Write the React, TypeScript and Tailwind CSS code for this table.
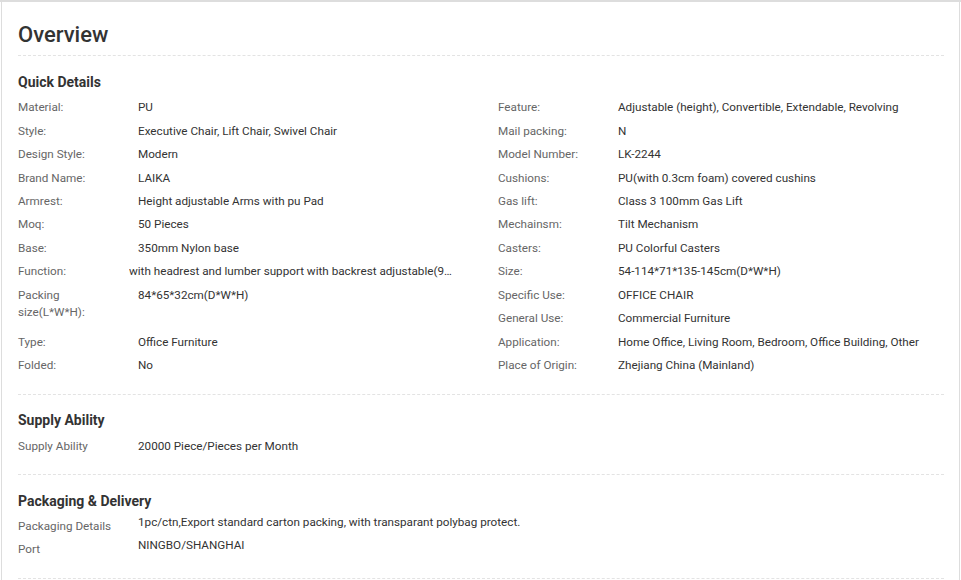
import React from "react";

type Item = { label: string; value: string; tall?: boolean; shift?: boolean };

const left: Item[] = [
  { label: "Material:", value: "PU" },
  { label: "Style:", value: "Executive Chair, Lift Chair, Swivel Chair" },
  { label: "Design Style:", value: "Modern" },
  { label: "Brand Name:", value: "LAIKA" },
  { label: "Armrest:", value: "Height adjustable Arms with pu Pad" },
  { label: "Moq:", value: "50 Pieces" },
  { label: "Base:", value: "350mm Nylon base" },
  {
    label: "Function:",
    value: "with headrest and lumber support with backrest adjustable(90-135 degree)",
    shift: true,
  },
  { label: "Packing size(L*W*H):", value: "84*65*32cm(D*W*H)", tall: true },
  { label: "Type:", value: "Office Furniture" },
  { label: "Folded:", value: "No" },
];

const right: Item[] = [
  { label: "Feature:", value: "Adjustable (height), Convertible, Extendable, Revolving" },
  { label: "Mail packing:", value: "N" },
  { label: "Model Number:", value: "LK-2244" },
  { label: "Cushions:", value: "PU(with 0.3cm foam) covered cushins" },
  { label: "Gas lift:", value: "Class 3 100mm Gas Lift" },
  { label: "Mechainsm:", value: "Tilt Mechanism" },
  { label: "Casters:", value: "PU Colorful Casters" },
  { label: "Size:", value: "54-114*71*135-145cm(D*W*H)" },
  { label: "Specific Use:", value: "OFFICE CHAIR" },
  { label: "General Use:", value: "Commercial Furniture" },
  { label: "Application:", value: "Home Office, Living Room, Bedroom, Office Building, Other" },
  { label: "Place of Origin:", value: "Zhejiang China (Mainland)" },
];

function Row({ item }: { item: Item }) {
  return (
    <div
      className={
        "flex py-[3px] leading-[17.45px] " + (item.tall ? "h-[46.9px]" : "h-[23.45px]")
      }
    >
      <div className={"w-[120px] shrink-0 text-[#666] " + (item.tall ? "pr-[40px]" : "")}>
        {item.label}
      </div>
      {item.shift ? (
        <div className="-ml-[9px] w-[328px] truncate text-[#333]">{item.value}</div>
      ) : (
        <div className="text-[#333] whitespace-nowrap">{item.value}</div>
      )}
    </div>
  );
}

function Dashed() {
  return <div className="border-t border-dashed border-[#e3e3e3]" />;
}

export default function App() {
  return (
    <div
      className="w-[961px] h-[580px] bg-white border-t-2 border-[#dddddd] overflow-hidden text-[11.7px]"
      style={{ fontFamily: "Roboto, 'Liberation Sans', sans-serif" }}
    >
      <div className="ml-[1px] w-[959px] h-full border-x border-[#dddddd] pl-[16px] pr-[15px]">
        <h1 className="pt-[18px] text-[22px] leading-[30px] font-medium text-[#333]">Overview</h1>
        <div className="mt-[5px]">
          <Dashed />
        </div>

        <h2 className="mt-[15.5px] text-[14px] leading-[20px] font-bold text-[#333]">Quick Details</h2>
        <div className="mt-[4.8px] grid grid-cols-2 w-[960px]">
          <div className="flex flex-col">
            {left.map((it) => (
              <Row key={it.label} item={it} />
            ))}
          </div>
          <div className="flex flex-col">
            {right.map((it) => (
              <Row key={it.label} item={it} />
            ))}
          </div>
        </div>
        <div className="mt-[16.3px]">
          <Dashed />
        </div>

        <h2 className="mt-[15px] text-[14px] leading-[20px] font-bold text-[#333]">Supply Ability</h2>
        <div className="mt-[5.3px] flex py-[3px] leading-[17.45px]">
          <div className="w-[120px] shrink-0 text-[#666]">Supply Ability</div>
          <div className="text-[#333]">20000 Piece/Pieces per Month</div>
        </div>
        <div className="mt-[15.3px]">
          <Dashed />
        </div>

        <h2 className="mt-[16px] text-[14px] leading-[20px] font-bold text-[#333]">
          Packaging &amp; Delivery
        </h2>
        <div className="mt-[3.3px] flex h-[23px] leading-[17.45px]">
          <div className="w-[120px] shrink-0 pt-[4px] text-[#666]">Packaging Details</div>
          <div className="text-[#333]">
            1pc/ctn,Export standard carton packing, with transparant polybag protect.
          </div>
        </div>
        <div className="flex h-[23px] leading-[17.45px]">
          <div className="w-[120px] shrink-0 pt-[4px] text-[#666]">Port</div>
          <div className="text-[#333]">NINGBO/SHANGHAI</div>
        </div>
        <div className="mt-[18px]">
          <Dashed />
        </div>
      </div>
    </div>
  );
}
